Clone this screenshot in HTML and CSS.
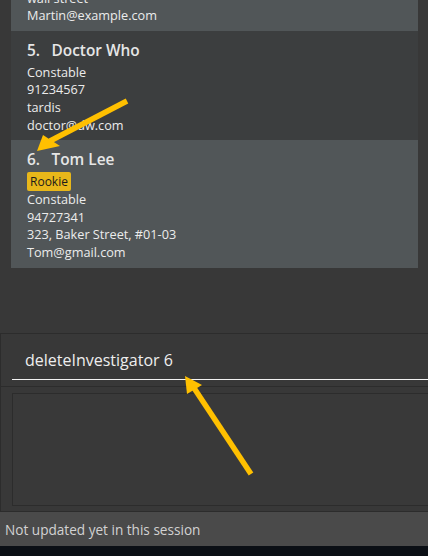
FILE: index.html
```html
<!DOCTYPE html>
<html>
<head>
<meta charset="utf-8">
<link rel="stylesheet" href="styles.css">
</head>
<body>
<div class="app">
  <div class="list-panel">
    <div class="list">
      <div class="card odd partial">
        <div class="line">wall street</div>
        <div class="line">Martin@example.com</div>
      </div>
      <div class="card even">
        <div class="name-row"><span class="id">5.</span><span class="name">Doctor Who</span></div>
        <div class="details">
          <div class="line">Constable</div>
          <div class="line">91234567</div>
          <div class="line">tardis</div>
          <div class="line">doctor@dw.com</div>
        </div>
      </div>
      <div class="card odd">
        <div class="name-row"><span class="id">6.</span><span class="name">Tom Lee</span></div>
        <div class="tags"><span class="tag">Rookie</span></div>
        <div class="line">Constable</div>
        <div class="line">94727341</div>
        <div class="line">323, Baker Street, #01-03</div>
        <div class="line">Tom@gmail.com</div>
      </div>
    </div>
  </div>
  <div class="command-pane">
    <div class="command-field">deleteInvestigator 6</div>
  </div>
  <div class="result-pane">
    <div class="result-box"></div>
  </div>
  <div class="status-bar">Not updated yet in this session</div>
  <div class="taskbar"></div>
</div>
<svg class="annotations" width="428" height="556" viewBox="0 0 428 556">
  <line x1="127" y1="101" x2="50" y2="141" stroke="#ffc000" stroke-width="5.5"/>
  <polygon points="37,151 43,135 60,146" fill="#ffc000"/>
  <line x1="251" y1="474" x2="194" y2="388" stroke="#ffc000" stroke-width="5.5"/>
  <polygon points="185,376 202,385 187,394" fill="#ffc000"/>
</svg>
</body>
</html>
```
FILE: styles.css
```css
html, body {
  margin: 0;
  padding: 0;
}
body {
  width: 428px;
  height: 556px;
  overflow: hidden;
  background: #383838;
  font-family: "Open Sans", "Noto Sans", sans-serif;
  color: #ececec;
  position: relative;
}
.app {
  display: flex;
  flex-direction: column;
  height: 556px;
}
.list-panel {
  height: 333px;
  flex: none;
  overflow: hidden;
  box-sizing: border-box;
  padding: 0 10px 0 11px;
}
.list {
  display: flex;
  flex-direction: column;
  margin-top: -10.4px;
}
.card {
  padding: 9px 16px 6px;
}
.card.partial {
  padding-top: 0;
}
.card.even {
  background: #3c3e3f;
}
.card.odd {
  background: #515658;
}
.name-row {
  display: flex;
  font-weight: 600;
  font-size: 15.4px;
  line-height: 22px;
  margin-bottom: 1.5px;
  color: #e6e6e6;
}
.id {
  width: 24.5px;
}
.line {
  font-size: 12.7px;
  line-height: 17.7px;
  white-space: nowrap;
}
.tags {
  display: flex;
  margin: -1px 0 0;
  height: 19px;
}
.tag {
  background: #e8b71a;
  color: #1b1b1b;
  font-size: 12px;
  line-height: 19px;
  padding: 0 3px;
  border-radius: 2px;
}
.command-pane {
  height: 53px;
  flex: none;
  box-sizing: border-box;
  border-top: 1px solid #2c2c2c;
  border-left: 1px solid #2c2c2c;
  padding: 7px 0 0 11px;
}
.command-field {
  height: 39px;
  box-sizing: border-box;
  border-bottom: 1px solid #f2f2f2;
  padding-left: 13px;
  display: flex;
  align-items: center;
  font-size: 16px;
  color: #eeeeee;
}
.result-pane {
  height: 126px;
  flex: none;
  box-sizing: border-box;
  border-top: 1px solid #2c2c2c;
  border-left: 1px solid #2c2c2c;
  border-bottom: 1px solid #2c2c2c;
  padding: 6px 0 5px 11px;
}
.result-box {
  height: 113px;
  box-sizing: border-box;
  border: 1px solid #2c2c2c;
  border-right: none;
  background: #393939;
}
.status-bar {
  height: 34px;
  flex: none;
  background: #4a4a4a;
  color: #d2d2d2;
  font-size: 13.6px;
  line-height: 35px;
  padding-left: 5px;
}
.taskbar {
  flex: 1;
  background: #0b0f15;
}
.annotations {
  position: absolute;
  left: 0;
  top: 0;
  pointer-events: none;
}
```
